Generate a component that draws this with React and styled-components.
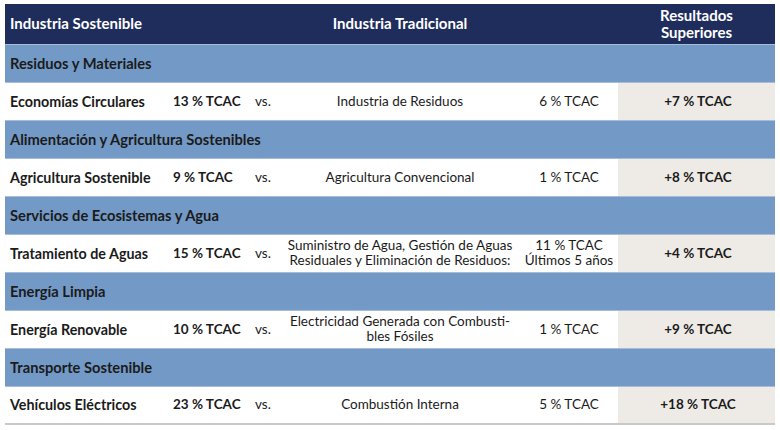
import React from 'react';
import styled, { createGlobalStyle } from 'styled-components';

const sections = [
  {
    title: 'Residuos y Materiales',
    name: 'Economías Circulares',
    growth: '13 % TCAC',
    traditional: ['Industria de Residuos'],
    tradGrowth: ['6 % TCAC'],
    result: '+7 % TCAC'
  },
  {
    title: 'Alimentación y Agricultura Sostenibles',
    name: 'Agricultura Sostenible',
    growth: '9 % TCAC',
    traditional: ['Agricultura Convencional'],
    tradGrowth: ['1 % TCAC'],
    result: '+8 % TCAC'
  },
  {
    title: 'Servicios de Ecosistemas y Agua',
    name: 'Tratamiento de Aguas',
    growth: '15 % TCAC',
    traditional: ['Suministro de Agua, Gestión de Aguas', 'Residuales y Eliminación de Residuos:'],
    tradGrowth: ['11 % TCAC', 'Últimos 5 años'],
    result: '+4 % TCAC'
  },
  {
    title: 'Energía Limpia',
    name: 'Energía Renovable',
    growth: '10 % TCAC',
    traditional: ['Electricidad Generada con Combusti-', 'bles Fósiles'],
    tradGrowth: ['1 % TCAC'],
    result: '+9 % TCAC'
  },
  {
    title: 'Transporte Sostenible',
    name: 'Vehículos Eléctricos',
    growth: '23 % TCAC',
    traditional: ['Combustión Interna'],
    tradGrowth: ['5 % TCAC'],
    result: '+18 % TCAC'
  }
];

const GlobalStyle = createGlobalStyle`
  body {
    margin: 0;
    background: #ffffff;
    font-family: Lato, "Noto Sans", sans-serif;
    color: #1b1b1b;
  }
`;

const Table = styled.table`
  margin: 4px 5px 0 5px;
  width: 770px;
  border-collapse: collapse;
  table-layout: fixed;
  font-size: 13.5px;
  line-height: 15px;
`;

const HeadRow = styled.tr`
  height: 40px;
  background: #1f2d5d;
  color: #ffffff;
`;

const HeadCell = styled.th`
  font-weight: 700;
  font-size: 15px;
  line-height: 17px;
  padding: 0 5px;
  text-align: ${(p) => p.align || 'center'};
`;

const SectionRow = styled.tr`
  height: 38px;
  background: #7399c6;
  border-top: 1px solid #a7bcd9;
`;

const SectionCell = styled.td`
  font-weight: 700;
  font-size: 14.7px;
  padding: 0 5px;
`;

const DataRow = styled.tr`
  height: 38px;
  background: #ffffff;
  border-top: 1px solid #a7bcd9;
  &:last-child td {
    border-bottom: 2px solid #c9c9c9;
  }
`;

const Cell = styled.td`
  padding: 0 2px 0 ${(p) => p.indent ?? 5}px;
  font-weight: ${(p) => (p.bold ? 700 : 400)};
  font-size: ${(p) => (p.large ? '14.3px' : 'inherit')};
  text-align: ${(p) => p.align || 'left'};
  background: ${(p) => (p.shade ? '#eeebe6' : 'transparent')};
  white-space: nowrap;
`;

const Line = styled.div`
  display: block;
`;

export default function App() {
  return (
    <>
      <GlobalStyle />
      <Table>
        <colgroup>
          <col style={{ width: 163 }} />
          <col style={{ width: 79 }} />
          <col style={{ width: 33 }} />
          <col style={{ width: 240 }} />
          <col style={{ width: 98 }} />
          <col style={{ width: 157 }} />
        </colgroup>
        <thead>
          <HeadRow>
            <HeadCell align="left">Industria Sostenible</HeadCell>
            <HeadCell />
            <HeadCell />
            <HeadCell>Industria Tradicional</HeadCell>
            <HeadCell />
            <HeadCell>
              <Line>Resultados</Line>
              <Line>Superiores</Line>
            </HeadCell>
          </HeadRow>
        </thead>
        <tbody>
          {sections.map((s) => (
            <React.Fragment key={s.title}>
              <SectionRow>
                <SectionCell colSpan={6}>{s.title}</SectionCell>
              </SectionRow>
              <DataRow>
                <Cell bold large>{s.name}</Cell>
                <Cell bold>{s.growth}</Cell>
                <Cell indent={8}>vs.</Cell>
                <Cell align="center" indent={2}>
                  {s.traditional.map((t) => (
                    <Line key={t}>{t}</Line>
                  ))}
                </Cell>
                <Cell align="center" indent={2}>
                  {s.tradGrowth.map((t) => (
                    <Line key={t}>{t}</Line>
                  ))}
                </Cell>
                <Cell align="center" bold shade>{s.result}</Cell>
              </DataRow>
            </React.Fragment>
          ))}
        </tbody>
      </Table>
    </>
  );
}
